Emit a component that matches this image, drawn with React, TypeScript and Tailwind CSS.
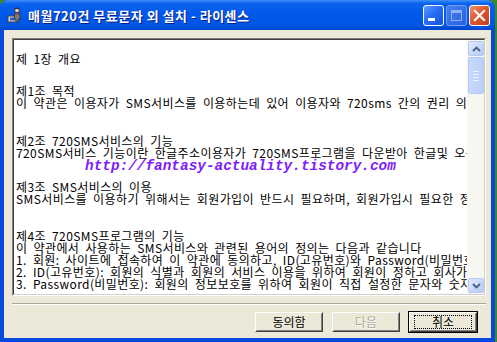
import React from "react";

const KR = "font-['Noto_Sans_CJK_KR','Noto_Sans',sans-serif]";

const lines: { text: string; mt: string }[] = [
  { text: "제 1장 개요", mt: "mt-0" },
  { text: "제1조 목적", mt: "mt-[20px]" },
  { text: "이 약관은 이용자가 SMS서비스를 이용하는데 있어 이용자와 720sms 간의 권리 의무 및 책임사항을 규정함을 목적으로 합니다.", mt: "mt-0" },
  { text: "제2조 720SMS서비스의 기능", mt: "mt-[26px]" },
  { text: "720SMS서비스 기능이란 한글주소이용자가 720SMS프로그램을 다운받아 한글및 오픈주소를 이용하는 기능입니다.", mt: "mt-0" },
  { text: "제3조 SMS서비스의 이용", mt: "mt-[22px]" },
  { text: "SMS서비스를 이용하기 위해서는 회원가입이 반드시 필요하며, 회원가입시 필요한 정보를 입력해야 합니다.", mt: "mt-0" },
  { text: "제4조 720SMS프로그램의 기능", mt: "mt-[25px]" },
  { text: "이 약관에서 사용하는 SMS서비스와 관련된 용어의 정의는 다음과 같습니다", mt: "mt-0" },
  { text: "1. 회원: 사이트에 접속하여 이 약관에 동의하고, ID(고유번호)와 Password(비밀번호)를 발급받은 자", mt: "mt-0" },
  { text: "2. ID(고유번호): 회원의 식별과 회원의 서비스 이용을 위하여 회원이 정하고 회사가 승인하는 번호", mt: "mt-0" },
  { text: "3. Password(비밀번호): 회원의 정보보호를 위하여 회원이 직접 설정한 문자와 숫자의 조합", mt: "mt-0" },
];

function TitleIcon() {
  return (
    <svg width="16" height="16" viewBox="0 0 16 16" className="shrink-0">
      <rect x="1" y="9" width="9" height="6" fill="#d8d8d8" stroke="#404040" strokeWidth="1" />
      <rect x="3" y="10.5" width="5" height="3" fill="#3060c0" />
      <circle cx="10" cy="3.5" r="2.3" fill="#f0d0b0" stroke="#303030" strokeWidth="0.8" />
      <path d="M7.5 2 h5 v-1.2 h-5 z" fill="#303030" />
      <path d="M8 6 h4.5 l1 6 h-2 l-0.5 3 h-2 l-0.3 -3 h-1.5 z" fill="#7a7a7a" stroke="#303030" strokeWidth="0.8" />
      <path d="M10.2 6 l0.8 3 l0.6 -3 z" fill="#c02020" />
    </svg>
  );
}

function CaptionButtons() {
  return (
    <div className="ml-auto mr-[5px] flex gap-[2px]">
      <div className="relative h-[21px] w-[21px] rounded-[3px] border border-white bg-[linear-gradient(135deg,#5b9bff_0%,#2a6df4_45%,#1152e0_100%)]">
        <div className="absolute bottom-[4px] left-[4px] h-[3px] w-[7px] bg-white" />
      </div>
      <div className="relative h-[21px] w-[21px] rounded-[3px] border border-[#7fa6f2] bg-[linear-gradient(135deg,#4f86ee_0%,#3c73e6_50%,#2f62dc_100%)] opacity-90">
        <div className="absolute left-[4px] top-[4px] h-[11px] w-[11px] border border-t-[3px] border-[#9fbcf4]" />
      </div>
      <div className="relative h-[21px] w-[21px] rounded-[3px] border border-white bg-[linear-gradient(135deg,#f08e6e_0%,#e0582f_45%,#c43c15_100%)]">
        <svg width="19" height="19" viewBox="0 0 19 19" className="absolute left-0 top-0">
          <path d="M5 5 L14 14 M14 5 L5 14" stroke="white" strokeWidth="2.2" strokeLinecap="square" />
        </svg>
      </div>
    </div>
  );
}

function ScrollArrow({ up }: { up: boolean }) {
  return (
    <div className="flex h-[15px] w-[16px] items-center justify-center rounded-[2px] border border-[#b5c8f3] bg-[linear-gradient(135deg,#e2ebfe_0%,#c6d6fb_60%,#b7c9f6_100%)]">
      <svg width="9" height="6" viewBox="0 0 9 6">
        <path d={up ? "M1 5 L4.5 1.5 L8 5" : "M1 1 L4.5 4.5 L8 1"} fill="none" stroke="#4d6185" strokeWidth="1.8" />
      </svg>
    </div>
  );
}

function Scrollbar() {
  return (
    <div className="flex w-[17px] shrink-0 flex-col items-center bg-[#f7f6f1] py-[1px] pl-[1px]">
      <ScrollArrow up />
      <div className="mt-[1px] flex h-[37px] w-[16px] flex-col items-center justify-center gap-[2px] rounded-[2px] border border-[#b5c8f3] bg-[linear-gradient(90deg,#c9d8fc_0%,#bccff9_100%)]">
        <div className="h-[1px] w-[6px] bg-[#eef3fe]" />
        <div className="h-[1px] w-[6px] bg-[#eef3fe]" />
        <div className="h-[1px] w-[6px] bg-[#eef3fe]" />
        <div className="h-[1px] w-[6px] bg-[#eef3fe]" />
      </div>
      <div className="flex-1" />
      <ScrollArrow up={false} />
    </div>
  );
}

function Button({ label, disabled, focused }: { label: string; disabled?: boolean; focused?: boolean }) {
  return (
    <div className={focused ? "border border-black" : "border border-transparent"}>
      <div className="border border-b-[#404040] border-l-white border-r-[#404040] border-t-white">
        <div
          className={`flex h-[18px] w-[66px] items-center justify-center border border-b-[#808080] border-l-[#ece9d8] border-r-[#808080] border-t-[#ece9d8] bg-[#ece9d8] text-[12px] leading-[12px] ${KR} ${
            disabled ? "text-[#aca899] [text-shadow:1px_1px_0_#ffffff]" : "text-black"
          }`}
        >
          {focused ? (
            <span className="flex h-[14px] w-[58px] items-center justify-center border border-dotted border-black">{label}</span>
          ) : (
            label
          )}
        </div>
      </div>
    </div>
  );
}

export default function App() {
  return (
    <div className="relative h-[342px] w-[497px] overflow-hidden bg-[#3d8a22]">
      <div className="flex h-full w-[495px] flex-col overflow-hidden rounded-t-[8px] bg-[#0848dc]">
        <div className="flex h-[30px] shrink-0 items-center gap-[4px] bg-[linear-gradient(180deg,#3d8ff8_0%,#0b62ee_12%,#0059ec_45%,#0055e4_85%,#0044cd_100%)] pl-[7px]">
          <TitleIcon />
          <span
            className={`ml-[1px] mt-[1px] text-[13px] font-bold leading-[16px] tracking-[0.5px] text-white [text-shadow:1px_1px_0_#0a1e8a] ${KR}`}
          >
            매월720건 무료문자 외 설치 - 라이센스
          </span>
          <CaptionButtons />
        </div>
        <div className="mx-[4px] mb-[4px] flex flex-1 flex-col bg-[#ece9d8] pl-[8px] pr-[5px] pt-[8px]">
          <div className="h-[258px] border border-b-white border-l-[#808080] border-r-white border-t-[#808080]">
            <div className="flex h-full border border-b-[#d4d0c8] border-l-[#404040] border-r-[#d4d0c8] border-t-[#404040] bg-white">
              <div
                className={`min-w-0 flex-1 overflow-hidden pl-[2px] pt-[13px] text-[12px] leading-[12px] tracking-[0.4px] text-black [word-spacing:3px] ${KR}`}
              >
                {lines.map((l, i) => (
                  <div key={i} className={`whitespace-nowrap ${l.mt}`}>
                    {l.text}
                  </div>
                ))}
              </div>
              <Scrollbar />
            </div>
          </div>
          <div className="mt-[7px] border-b border-t border-b-white border-t-[#aca899]" />
          <div className="mr-[8px] mt-[6px] flex justify-end gap-[7px]">
            <Button label="동의함" />
            <Button label="다음" disabled />
            <Button label="취소" focused />
          </div>
        </div>
      </div>
      <div className="absolute left-[85px] top-[159px] whitespace-nowrap font-['Liberation_Mono',monospace] text-[14.4px] font-bold italic leading-[14px] text-[#7c1cff]">
        http://fantasy-actuality.tistory.com
      </div>
    </div>
  );
}
